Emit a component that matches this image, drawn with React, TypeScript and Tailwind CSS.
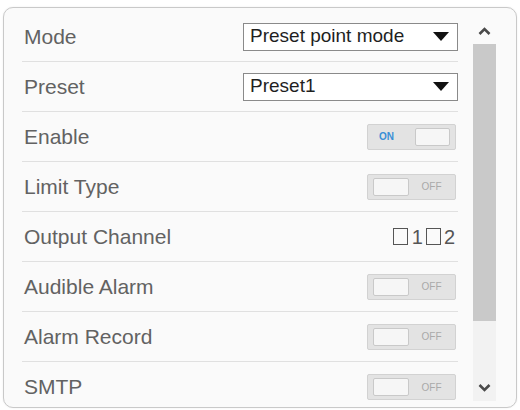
const rows = [
  { label: "Mode", kind: "select", value: "Preset point mode" },
  { label: "Preset", kind: "select", value: "Preset1" },
  { label: "Enable", kind: "on" },
  { label: "Limit Type", kind: "off" },
  { label: "Output Channel", kind: "check" },
  { label: "Audible Alarm", kind: "off" },
  { label: "Alarm Record", kind: "off" },
  { label: "SMTP", kind: "off" },
];

function Select({ value }: { value: string }) {
  return (
    <div className="flex h-[28px] w-[215px] items-center justify-between border border-[#8a8a8a] bg-white pl-[6px] pr-[8px] text-[19px] text-[#1f1f1f]">
      <span>{value}</span>
      <svg width="16" height="9" viewBox="0 0 16 9">
        <path d="M0 0h16L8 9z" fill="#111" />
      </svg>
    </div>
  );
}

function Toggle({ on }: { on: boolean }) {
  return (
    <div className="mr-[2px] flex h-[26px] w-[89px] items-center rounded-[2px] border border-[#d2d2d2] bg-[#e3e3e3] px-[5px]">
      {on ? (
        <>
          <span className="flex-1 pl-[6px] text-[10px] font-bold text-[#3a8fd6]">ON</span>
          <div className="h-[18px] w-[35px] rounded-[2px] border border-[#c9c9c9] bg-[#f6f6f6]" />
        </>
      ) : (
        <>
          <div className="h-[18px] w-[36px] rounded-[2px] border border-[#c9c9c9] bg-[#f6f6f6]" />
          <span className="flex-1 pl-[4px] text-center text-[10px] text-[#a9a9a9]">OFF</span>
        </>
      )}
    </div>
  );
}

function Box() {
  return <span className="inline-block h-[17px] w-[15px] border-[1.5px] border-[#555]" />;
}

function Channels() {
  return (
    <div className="mr-[3px] flex items-center text-[20px] text-[#555]">
      <Box />
      <span className="pl-[4px] pr-[3px]">1</span>
      <Box />
      <span className="pl-[3px]">2</span>
    </div>
  );
}

function Chevron({ up }: { up?: boolean }) {
  return (
    <svg width="13" height="8" viewBox="0 0 13 8">
      <path
        d={up ? "M1.5 7L6.5 2L11.5 7" : "M1.5 1L6.5 6L11.5 1"}
        fill="none"
        stroke="#4a4a4a"
        strokeWidth="2.6"
      />
    </svg>
  );
}

export default function App() {
  return (
    <div className="h-[410px] w-[520px] bg-white pl-[3px] pt-[7px] font-['Liberation_Sans',Arial,sans-serif]">
      <div className="flex h-[401px] w-[514px] rounded-[10px] border border-[#c9c9c9] bg-[#fafafa] shadow-[0_0_2px_rgba(0,0,0,0.08)]">
        {/* settings list */}
        <div className="ml-[18px] w-[436px] pt-[4px]">
          {rows.map((r, i) => (
            <div
              key={r.label}
              className={`flex h-[50px] items-center justify-between ${i < rows.length - 1 ? "border-b border-[#e0e0e0]" : ""}`}
            >
              <span className="pl-[2px] text-[21px] text-[#626262]">{r.label}</span>
              {r.kind === "select" && <Select value={r.value!} />}
              {r.kind === "on" && <Toggle on />}
              {r.kind === "off" && <Toggle on={false} />}
              {r.kind === "check" && <Channels />}
            </div>
          ))}
        </div>
        {/* scrollbar */}
        <div className="ml-[15px] flex w-[23px] flex-col pb-[6px] pt-[9px]">
          <div className="flex h-[27px] items-center justify-center">
            <Chevron up />
          </div>
          <div className="flex-1 bg-[#f2f2f2]">
            <div className="h-[277px] bg-[#c9c9c9]" />
          </div>
          <div className="flex h-[26px] items-center justify-center bg-[#f2f2f2]">
            <Chevron />
          </div>
        </div>
      </div>
    </div>
  );
}
